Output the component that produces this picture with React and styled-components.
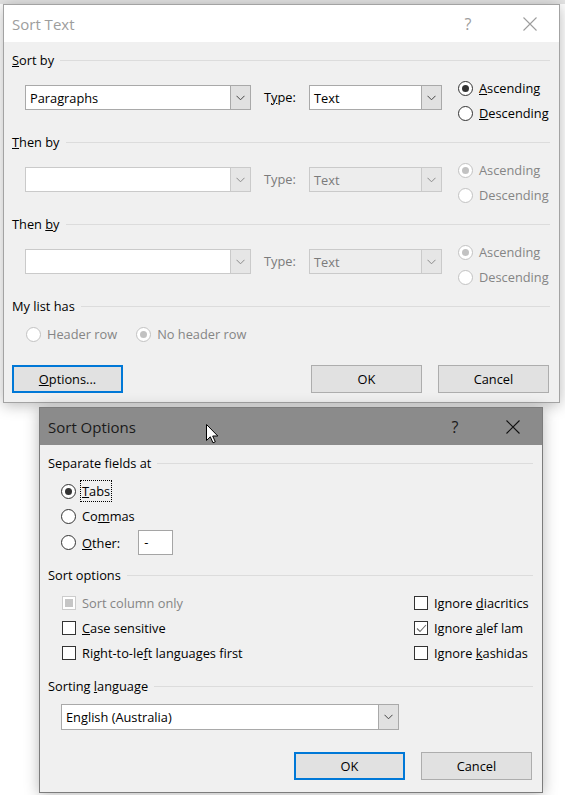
import styled, { createGlobalStyle } from "styled-components";

const GlobalStyle = createGlobalStyle`
  body {
    margin: 0;
    background: #fff;
    font-family: "Open Sans", "Noto Sans", sans-serif;
    font-size: 12.8px;
    color: #000;
  }
  * { box-sizing: border-box; }
`;

// Page and dialogs
const Page = styled.div`
  position: relative;
  width: 565px;
  height: 795px;
  padding-top: 4px;
  overflow: hidden;
  background: linear-gradient(to bottom, #e4e4e4 0 4px, #fff 4px);
`;

const Dialog = styled.div`
  position: relative;
  margin-left: ${(p) => p.$left}px;
  margin-top: ${(p) => p.$top || 0}px;
  width: ${(p) => p.$width}px;
  border: 1px solid ${(p) => (p.$active ? "#7c7c7c" : "#a3a3a3")};
  background: #f0f0f0;
  box-shadow: 0 2px 14px rgba(0, 0, 0, 0.28);
`;

const TitleBar = styled.div`
  display: flex;
  align-items: center;
  height: 37px;
  padding-left: 8px;
  background: ${(p) => (p.$active ? "#8b8b8b" : "#fff")};
  color: ${(p) => (p.$active ? "#1a1a1a" : "#9d9d9d")};
`;

const Title = styled.div`
  flex: 1;
  font-size: 15px;
`;

const CaptionButton = styled.div`
  width: ${(p) => p.$width || 58}px;
  height: 37px;
  display: flex;
  align-items: center;
  justify-content: center;
  font-size: 16px;
`;

const Body = styled.div`
  padding: 9px 9px ${(p) => p.$bottom || 9}px 8px;
`;

const SectionHeader = styled.div`
  display: flex;
  align-items: center;
  gap: 6px;
  height: 18px;
  margin-top: ${(p) => p.$mt || 0}px;
  &::after {
    content: "";
    flex: 1;
    height: 1px;
    background: #dcdcdc;
  }
`;

const SortRow = styled.div`
  display: flex;
  align-items: flex-start;
  height: 64px;
  padding-left: 13px;
`;

const Combo = styled.div`
  display: flex;
  width: ${(p) => p.$width}px;
  height: ${(p) => p.$height || 25}px;
  margin-top: ${(p) => p.$mt || 0}px;
  margin-left: ${(p) => p.$ml || 0}px;
  border: 1px solid ${(p) => (p.$disabled ? "#cacaca" : "#a9a9a9")};
  background: ${(p) => (p.$disabled && !p.$empty ? "#ededed" : "#fff")};
  color: ${(p) => (p.$disabled ? "#7b7b7b" : "#000")};
`;

const ComboText = styled.div`
  flex: 1;
  display: flex;
  align-items: center;
  padding-left: 4px;
`;

const ComboButton = styled.div`
  width: 20px;
  display: flex;
  align-items: center;
  justify-content: center;
  border-left: 1px solid ${(p) => (p.$disabled ? "#cacaca" : "#a9a9a9")};
  background: ${(p) => (p.$disabled ? "#e6e6e6" : "#e1e1e1")};
`;

const TypeLabel = styled.div`
  width: 45px;
  margin-left: 13px;
  margin-top: 16px;
  line-height: 25px;
  color: ${(p) => (p.$disabled ? "#7b7b7b" : "#000")};
`;

const RadioGroup = styled.div`
  display: flex;
  flex-direction: column;
  gap: 5px;
  margin-left: 16px;
  margin-top: 9px;
`;

const Option = styled.label`
  display: flex;
  align-items: center;
  gap: 6px;
  height: 20px;
  margin-top: ${(p) => p.$mt || 0}px;
  white-space: nowrap;
  color: ${(p) => (p.$disabled ? "#858585" : "#000")};
`;

const Circle = styled.span`
  position: relative;
  width: 15px;
  height: 15px;
  border-radius: 50%;
  border: 1px solid ${(p) => (p.$disabled ? "#c2c2c2" : "#333")};
  background: #fff;
  flex: none;
  &::after {
    content: "";
    display: ${(p) => (p.$checked ? "block" : "none")};
    position: absolute;
    left: 3px;
    top: 3px;
    width: 7px;
    height: 7px;
    border-radius: 50%;
    background: ${(p) => (p.$disabled ? "#c2c2c2" : "#333")};
  }
`;

const Box = styled.span`
  position: relative;
  width: 14px;
  height: 14px;
  border: 1px solid ${(p) => (p.$disabled ? "#cccccc" : "#333")};
  background: #fff;
  flex: none;
  display: flex;
  align-items: center;
  justify-content: center;
`;

const BoxFill = styled.span`
  width: 8px;
  height: 8px;
  background: #c6c6c6;
`;

const Focus = styled.span`
  outline: 1px dotted #000;
  outline-offset: 1px;
`;

const ListRow = styled.div`
  display: flex;
  gap: 19px;
  padding-left: 14px;
  margin-top: 9px;
`;

const ButtonRow = styled.div`
  display: flex;
  gap: 16px;
  margin-top: ${(p) => p.$mt}px;
  margin-right: 1px;
`;

const Button = styled.div`
  width: 111px;
  height: 28px;
  display: flex;
  align-items: center;
  justify-content: center;
  background: #e1e1e1;
  border: ${(p) => (p.$default ? "2px solid #0078d7" : "1px solid #adadad")};
`;

const Spacer = styled.div`
  flex: 1;
`;

const OptionList = styled.div`
  display: flex;
  flex-direction: column;
  padding-left: 13px;
  margin-top: 9px;
`;

const OtherRow = styled.div`
  display: flex;
  align-items: center;
  height: 25px;
  margin-top: 4px;
`;

const TextBox = styled.div`
  width: 35px;
  height: 25px;
  margin-left: 18px;
  border: 1px solid #a5a5a5;
  background: #fff;
  padding-left: 5px;
  line-height: 22px;
`;

const CheckGrid = styled.div`
  display: grid;
  grid-template-columns: 352px auto;
  row-gap: 5px;
  padding-left: 14px;
  margin-top: 9px;
`;

const Cursor = styled.svg`
  position: absolute;
  left: 206px;
  top: 424px;
`;

const Chevron = ({ disabled }) => (
  <svg width="9" height="6" viewBox="0 0 9 6">
    <path d="M0.5 0.8 L4.5 4.8 L8.5 0.8" fill="none" stroke={disabled ? "#8a8a8a" : "#444"} strokeWidth="1" />
  </svg>
);

const CloseIcon = ({ color }) => (
  <svg width="14" height="14" viewBox="0 0 14 14">
    <path d="M0.5 0.5 L13.5 13.5 M13.5 0.5 L0.5 13.5" stroke={color} strokeWidth="1.1" />
  </svg>
);

const Check = () => (
  <svg width="11" height="9" viewBox="0 0 11 9">
    <path d="M1 4.5 L4 7.5 L10 1" fill="none" stroke="#6a6a6a" strokeWidth="1.1" />
  </svg>
);

function Radio({ label, checked, disabled, mt }) {
  return (
    <Option $disabled={disabled} $mt={mt}>
      <Circle $checked={checked} $disabled={disabled} />
      <span>{label}</span>
    </Option>
  );
}

function CheckItem({ label, checked, disabled, partial }) {
  return (
    <Option $disabled={disabled}>
      <Box $disabled={disabled}>
        {partial && <BoxFill />}
        {checked && <Check />}
      </Box>
      <span>{label}</span>
    </Option>
  );
}

function SortSection({ title, value, disabled }) {
  return (
    <>
      <SectionHeader>{title}</SectionHeader>
      <SortRow>
        <Combo $width={226} $mt={16} $disabled={disabled} $empty={disabled}>
          <ComboText>{value}</ComboText>
          <ComboButton $disabled={disabled}>
            <Chevron disabled={disabled} />
          </ComboButton>
        </Combo>
        <TypeLabel $disabled={disabled}>
          {disabled ? "Type:" : <>T<u>y</u>pe:</>}
        </TypeLabel>
        <Combo $width={133} $mt={16} $disabled={disabled}>
          <ComboText>Text</ComboText>
          <ComboButton $disabled={disabled}>
            <Chevron disabled={disabled} />
          </ComboButton>
        </Combo>
        <RadioGroup>
          <Radio
            label={disabled ? "Ascending" : <><u>A</u>scending</>}
            checked
            disabled={disabled}
          />
          <Radio
            label={disabled ? "Descending" : <><u>D</u>escending</>}
            disabled={disabled}
          />
        </RadioGroup>
      </SortRow>
    </>
  );
}

export default function App() {
  return (
    <Page>
      <GlobalStyle />

      <Dialog $left={3} $width={557}>
        <TitleBar>
          <Title>Sort Text</Title>
          <CaptionButton $width={66}>?</CaptionButton>
          <CaptionButton>
            <CloseIcon color="#9d9d9d" />
          </CaptionButton>
        </TitleBar>
        <Body>
          <SortSection title={<span><u>S</u>ort by</span>} value="Paragraphs" />
          <SortSection title={<span><u>T</u>hen by</span>} disabled />
          <SortSection title={<span>Then <u>b</u>y</span>} disabled />
          <SectionHeader>My list has</SectionHeader>
          <ListRow>
            <Radio label="Header row" disabled />
            <Radio label="No header row" checked disabled />
          </ListRow>
          <ButtonRow $mt={21}>
            <Button $default>
              <span><u>O</u>ptions...</span>
            </Button>
            <Spacer />
            <Button>OK</Button>
            <Button>Cancel</Button>
          </ButtonRow>
        </Body>
      </Dialog>

      <Dialog $left={39} $top={4} $width={504} $active>
        <TitleBar $active>
          <Title>Sort Options</Title>
          <CaptionButton>?</CaptionButton>
          <CaptionButton>
            <CloseIcon color="#111" />
          </CaptionButton>
        </TitleBar>
        <Body $bottom={12}>
          <SectionHeader>Separate fields at</SectionHeader>
          <OptionList>
            <Radio label={<Focus><u>T</u>abs</Focus>} checked />
            <Radio label={<>Co<u>m</u>mas</>} mt={5} />
            <OtherRow>
              <Radio label={<><u>O</u>ther:</>} />
              <TextBox>-</TextBox>
            </OtherRow>
          </OptionList>

          <SectionHeader $mt={11}>Sort options</SectionHeader>
          <CheckGrid>
            <CheckItem label="Sort column only" disabled partial />
            <CheckItem label={<>Ignore <u>d</u>iacritics</>} />
            <CheckItem label={<><u>C</u>ase sensitive</>} />
            <CheckItem label={<>Ignore <u>a</u>lef lam</>} checked />
            <CheckItem label={<>Right-to-le<u>f</u>t languages first</>} />
            <CheckItem label={<>Ignore <u>k</u>ashidas</>} />
          </CheckGrid>

          <SectionHeader $mt={14}>
            <span>Sorting <u>l</u>anguage</span>
          </SectionHeader>
          <Combo $width={338} $height={26} $ml={13} $mt={9}>
            <ComboText>English (Australia)</ComboText>
            <ComboButton>
              <Chevron />
            </ComboButton>
          </Combo>
          <ButtonRow $mt={22}>
            <Spacer />
            <Button $default>OK</Button>
            <Button>Cancel</Button>
          </ButtonRow>
        </Body>
      </Dialog>

      <Cursor width="13" height="20" viewBox="0 0 13 20">
        <path
          d="M0.5 0.5 L0.5 16.5 L4.3 12.8 L7 18.8 L9.3 17.8 L6.7 12 L11.8 12 Z"
          fill="#fff"
          stroke="#000"
          strokeWidth="1"
          strokeLinejoin="round"
        />
      </Cursor>
    </Page>
  );
}
